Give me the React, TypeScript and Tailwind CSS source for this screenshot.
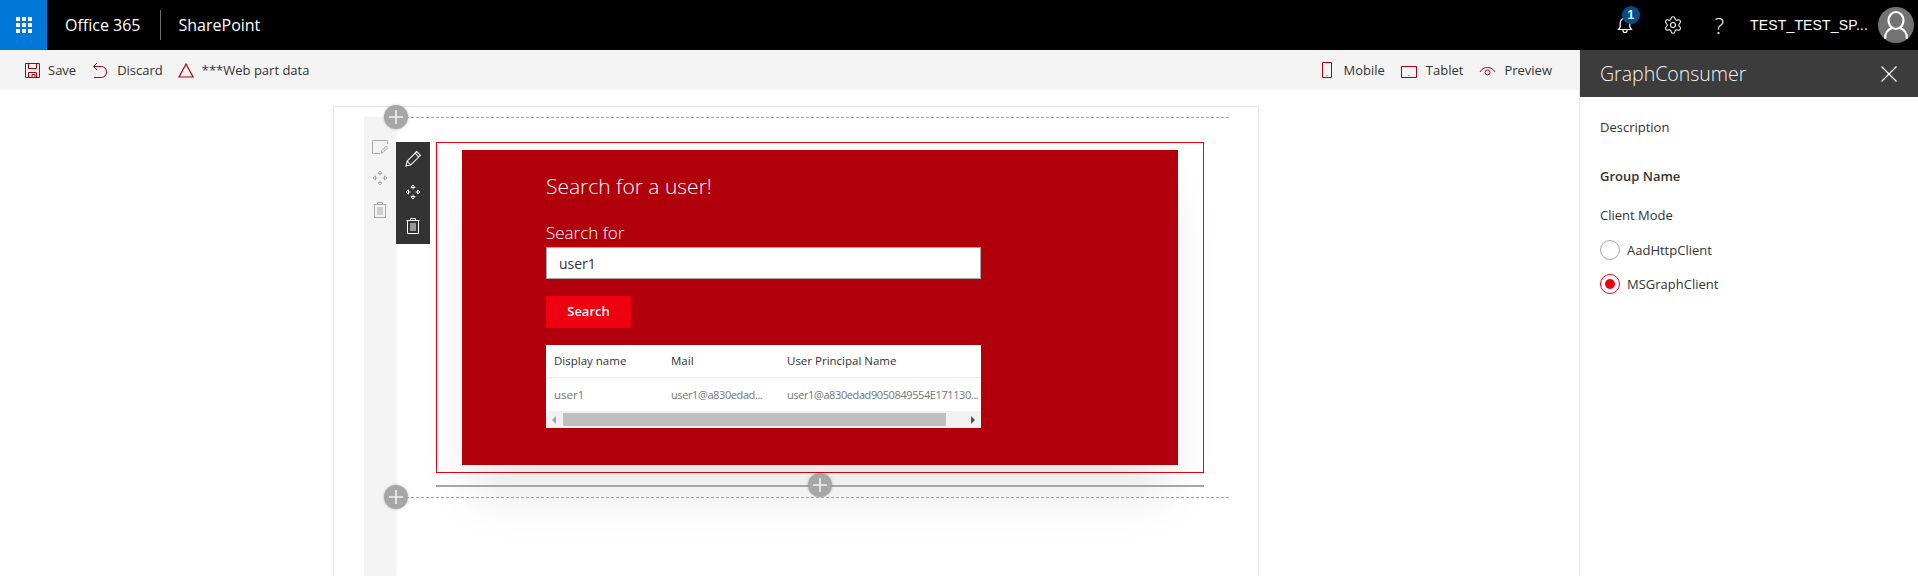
import { Settings } from "lucide-react";

const font = "font-['Open_Sans','Noto_Sans',sans-serif]";

function ToolIcon({ d, className }: { d: string; className?: string }) {
  return (
    <svg viewBox="0 0 16 16" fill="none" stroke="currentColor" strokeWidth="1" className={className}>
      <path d={d} />
    </svg>
  );
}

const MOVE =
  "M8 3.5V5.5M8 10.5V12.5M3.5 8H5.5M10.5 8H12.5M8 1L6 3.5H10ZM8 15L6 12.5H10ZM1 8L3.5 6V10ZM15 8L12.5 6V10Z";
const TRASH = "M1.5 2.5H14.5M5.5 2.5V0.5H10.5V2.5M2.5 2.5V15.5H13.5V2.5M6 5V13M8 5V13M10 5V13";
const PENCIL = "M1 15L2 10.5L11 1.5L14.5 5L5.5 14ZM2 10.5L5.5 14M9.5 3L13 6.5";

function PlusCircle({ className }: { className: string }) {
  return (
    <div className={`absolute flex h-6 w-6 items-center justify-center rounded-full bg-[#a6a6a6] shadow-[0_0_3px_rgba(0,0,0,0.25)] ${className}`}>
      <svg viewBox="0 0 16 16" className="h-4 w-4" stroke="#eef2f5" strokeWidth="1.6">
        <path d="M8 1V15M1 8H15" />
      </svg>
    </div>
  );
}

function Waffle() {
  const dots = [0, 1, 2, 3, 4, 5, 6, 7, 8];
  return (
    <div className="grid grid-cols-3 gap-[2px]">
      {dots.map((n) => (
        <span key={n} className="h-[4px] w-[4px] bg-white" />
      ))}
    </div>
  );
}

function TopBar() {
  return (
    <header className="flex h-[50px] shrink-0 items-center bg-black text-white">
      <div className="flex h-full w-[47px] items-center justify-center bg-[#0078d7]">
        <Waffle />
      </div>
      <span className="ml-[18px] text-[16px] leading-none">Office 365</span>
      <span className="ml-[19px] h-[30px] w-px bg-[#6e6e6e]" />
      <span className="ml-[18px] text-[16px] leading-none">SharePoint</span>
      <div className="ml-auto flex h-full items-center">
        <div className="relative mr-[30px]">
          <svg viewBox="0 0 16 18" fill="none" stroke="white" strokeWidth="1.2" className="h-[18px] w-[16px]">
            <path d="M1.5 13.5H14.5L12.8 11V7A4.8 4.8 0 0 0 3.2 7V11ZM6 13.5V14.5A2 2 0 0 0 10 14.5V13.5" />
          </svg>
          <span className="absolute -top-[10px] left-[5px] flex h-[18px] w-[18px] items-center justify-center rounded-full bg-[#004e8c] font-['Liberation_Sans',sans-serif] text-[12px] font-bold">
            1
          </span>
        </div>
        <Settings className="mr-[32px] h-[20px] w-[20px]" strokeWidth={1.3} />
        <span className="mr-[26px] text-[22px] font-light leading-none">?</span>
        <span className="mr-[10px] font-['Liberation_Sans',sans-serif] text-[14px] tracking-[0.15px]">TEST_TEST_SP...</span>
        <div className="mr-[4px] flex h-[36px] w-[36px] items-center justify-center overflow-hidden rounded-full bg-[#737373]">
          <svg viewBox="0 0 36 36" fill="none" stroke="white" strokeWidth="2.2" className="h-[36px] w-[36px]">
            <ellipse cx="18" cy="13.5" rx="7.5" ry="8.5" />
            <path d="M7 32C7 25 11 22 14 21M29 32C29 25 25 22 22 21" />
          </svg>
        </div>
      </div>
    </header>
  );
}

function ToolbarButton({ label, icon, className }: { label: string; icon: React.ReactNode; className: string }) {
  return (
    <div className={`flex items-center ${className}`}>
      {icon}
      <span className="text-[13px] leading-none text-[#333]">{label}</span>
    </div>
  );
}

function Toolbar() {
  return (
    <div className="flex h-[40px] shrink-0 items-center bg-[#f4f4f4] text-[#b1000c]">
      <ToolbarButton
        className="ml-[25px]"
        label="Save"
        icon={
          <svg viewBox="0 0 15 15" fill="none" stroke="currentColor" className="mr-[8px] h-[15px] w-[15px]">
            <path d="M0.5 0.5H14.5V14.5H0.5ZM3.5 0.5V5.5H11.5V0.5M3.5 14.5V9.5H11.5V14.5M7 14.5V11.5H10V14.5" />
          </svg>
        }
      />
      <ToolbarButton
        className="ml-[16px]"
        label="Discard"
        icon={
          <svg viewBox="0 0 16 16" fill="none" stroke="currentColor" className="mr-[9px] h-[16px] w-[16px]">
            <path d="M5 1L1.5 4.5L5 8M1.5 4.5H9.5A5 5.5 0 0 1 9.5 15.5H2" />
          </svg>
        }
      />
      <ToolbarButton
        className="ml-[15px]"
        label="***Web part data"
        icon={
          <svg viewBox="0 0 16 15" fill="none" stroke="currentColor" strokeWidth="1.2" className="mr-[8px] h-[15px] w-[16px]">
            <path d="M8 1L15 14H1Z" />
          </svg>
        }
      />
      <div className="ml-auto flex items-center">
        <ToolbarButton
          className="mr-[16px]"
          label="Mobile"
          icon={
            <svg viewBox="0 0 10 16" fill="none" stroke="currentColor" className="mr-[12px] h-[16px] w-[10px]">
              <path d="M0.5 0.5H9.5V15.5H0.5ZM5 13V13.8" />
            </svg>
          }
        />
        <ToolbarButton
          className="mr-[16px]"
          label="Tablet"
          icon={
            <svg viewBox="0 0 16 12" fill="none" stroke="currentColor" className="mt-[4px] mr-[9px] h-[12px] w-[16px]">
              <path d="M0.5 0.5H15.5V11.5H0.5ZM8 9V9.8" />
            </svg>
          }
        />
        <ToolbarButton
          className="mr-[27px]"
          label="Preview"
          icon={
            <svg viewBox="0 0 17 11" fill="none" stroke="currentColor" className="mr-[8px] h-[11px] w-[17px]">
              <path d="M1 7A8.5 8.5 0 0 1 16 7" />
              <circle cx="8.5" cy="7.5" r="2.5" />
            </svg>
          }
        />
      </div>
    </div>
  );
}

function SearchPart() {
  return (
    <div className="h-[315px] w-[716px] bg-[#b1000c] pl-[84px] pt-[21px] shadow-[0_38px_50px_-8px_rgba(0,0,0,0.09),0_0_16px_rgba(0,0,0,0.02)]">
      <div className="w-[435px] text-white">
        <h2 className="text-[21px] font-light leading-[30px]">Search for a user!</h2>
        <div className="mt-[17px] text-[17px] font-light leading-[29px]">
          Search for <span className="text-[#a80000]">*</span>
        </div>
        <input
          readOnly
          value="user1"
          className="block h-[32px] w-full border border-[#a6a6a6] bg-white px-[12px] text-[14px] text-[#333] outline-none"
        />
        <button className="mt-[17px] h-[32px] w-[85px] bg-[#ee0010] text-[13px] font-semibold text-white">Search</button>
        <div className="mt-[17px] overflow-hidden bg-white text-[11.5px] leading-none">
          <div className="grid h-[33px] grid-cols-[117px_116px_1fr] items-center border-b border-[#eaeaea] pl-[8px] text-[#333]">
            <span>Display name</span>
            <span>Mail</span>
            <span>User Principal Name</span>
          </div>
          <div className="grid h-[33px] grid-cols-[117px_116px_1fr] items-center pl-[8px] text-[#767676]">
            <span>user1</span>
            <span className="whitespace-nowrap text-[11px] tracking-[-0.4px]">user1@a830edad...</span>
            <span className="whitespace-nowrap text-[11px] tracking-[-0.4px]">user1@a830edad9050849554E171130...</span>
          </div>
          <div className="flex h-[17px] items-center bg-[#f1f1f1]">
            <span className="ml-[6px] h-0 w-0 border-y-[4px] border-r-[4px] border-y-transparent border-r-[#a3a3a3]" />
            <span className="ml-[7px] h-[13px] w-[383px] bg-[#bfbfbf]" />
            <span className="ml-auto mr-[6px] h-0 w-0 border-y-[4px] border-l-[4px] border-y-transparent border-l-[#505050]" />
          </div>
        </div>
      </div>
    </div>
  );
}

function Canvas() {
  return (
    <div className="min-h-0 flex-1 pl-[333px] pt-[16px]">
      <div className="flex h-full w-[926px] border-x border-t border-[#e6e6e6] pl-[30px] pt-[10px]">
        <div className="flex w-[32px] shrink-0 flex-col items-center bg-[#f4f4f4] pt-[23px] text-[#a9a9a9] shadow-[1px_0_2px_rgba(0,0,0,0.05)]">
          <svg viewBox="0 0 16 14" fill="none" stroke="currentColor" className="h-[14px] w-[16px]">
            <path d="M8 13.5H0.5V0.5H15.5V4M9 13.5L10 10.5L14.5 6L16 7.5L11.5 12Z" />
          </svg>
          <ToolIcon d={MOVE} className="mt-[16px] h-[16px] w-[16px]" />
          <ToolIcon d={TRASH} className="mt-[16px] h-[16px] w-[16px]" />
        </div>
        <div className="relative flex-1">
          <PlusCircle className="-left-[12px] -top-[12px]" />
          <div className="w-[833px] border-t border-dashed border-[#a6a6a6]" />
          <div className="flex pt-[24px]">
            <div className="flex h-[102px] w-[34px] flex-col items-center bg-[#333] pt-[8px] text-white">
              <ToolIcon d={PENCIL} className="h-[17px] w-[17px]" />
              <ToolIcon d={MOVE} className="mt-[17px] h-[16px] w-[16px]" />
              <ToolIcon d={TRASH} className="mt-[18px] h-[16px] w-[16px]" />
            </div>
            <div className="ml-[6px] h-[331px] w-[768px] border border-[#ee0010] pl-[25px] pt-[7px]">
              <SearchPart />
            </div>
          </div>
          <div className="relative ml-[40px] mt-[12px] h-[2px] w-[768px] bg-[#a6a6a6]">
            <PlusCircle className="left-[372px] -top-[12px]" />
          </div>
          <div className="relative mt-[10px] w-[833px] border-t border-dashed border-[#a6a6a6]">
            <PlusCircle className="-left-[12px] -top-[13px]" />
          </div>
        </div>
      </div>
    </div>
  );
}

function PropertyPane() {
  return (
    <aside className="flex w-[339px] shrink-0 flex-col border-l border-[#eaeaea] bg-white text-[#333]">
      <div className="flex h-[47px] shrink-0 items-center justify-between bg-[#3c3c3c] pl-[20px] pr-[21px] text-[#f4f4f4]">
        <span className="text-[19.5px] font-light leading-none">GraphConsumer</span>
        <svg viewBox="0 0 16 16" stroke="white" strokeWidth="1.2" className="h-[16px] w-[16px]">
          <path d="M0.5 0.5L15.5 15.5M15.5 0.5L0.5 15.5" />
        </svg>
      </div>
      <div className="pl-[20px] text-[13px] leading-[18px]">
        <p className="mt-[21px]">Description</p>
        <p className="mt-[31px] font-semibold">Group Name</p>
        <p className="mt-[21px]">Client Mode</p>
        <div className="mt-[16px] flex items-center">
          <span className="mr-[7px] h-[20px] w-[20px] rounded-full border border-[#a6a6a6]" />
          <span>AadHttpClient</span>
        </div>
        <div className="mt-[14px] flex items-center">
          <span className="mr-[7px] flex h-[20px] w-[20px] items-center justify-center rounded-full border border-[#ee0010]">
            <span className="h-[10px] w-[10px] rounded-full bg-[#ee0010]" />
          </span>
          <span>MSGraphClient</span>
        </div>
      </div>
    </aside>
  );
}

export default function App() {
  return (
    <div className={`flex h-[576px] w-[1918px] flex-col overflow-hidden bg-white ${font}`}>
      <TopBar />
      <div className="flex min-h-0 flex-1">
        <main className="flex min-w-0 flex-1 flex-col">
          <Toolbar />
          <Canvas />
        </main>
        <PropertyPane />
      </div>
    </div>
  );
}
